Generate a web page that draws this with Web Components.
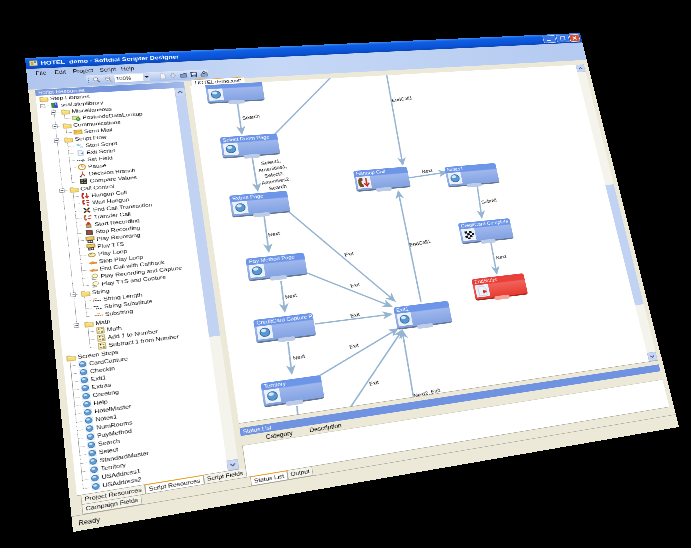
<!DOCTYPE html>
<html>
<head>
<meta charset="utf-8">
<title>Softdial Scripter Designer</title>
<style>
    html, body { margin: 0; height: 100%; overflow: hidden; background: #000; }
</style>
</head>
<body>
<scripter-window>
    <title-bar slot="title">HOTEL&nbsp; demo - Softdial Scripter Designer</title-bar>
    <command-band slot="band"></command-band>
    <dock-pane slot="left" heading="Script Resources">
        <tree-view></tree-view>
        <v-scroll thumb-top="0" thumb-size="68"></v-scroll>
    </dock-pane>
    <tab-strip slot="left-tabs" tabs="Project Resources|Script Resources|Script Fields" second="Campaign Fields" active="1"></tab-strip>
    <doc-tab slot="doc">HOTEL demo.xml*</doc-tab>
    <flow-diagram slot="canvas"></flow-diagram>
    <v-scroll slot="canvas-scroll" thumb-top="42" thumb-size="42"></v-scroll>
    <status-list slot="status"></status-list>
    <tab-strip slot="status-tabs" tabs="Status List|Output" active="0"></tab-strip>
    <span slot="ready">Ready</span>
</scripter-window>

<script>
// flat size of the window and where its corners land in the picture
const WIN_W = 1160, WIN_H = 990;
const CORNERS = [[25, 58], [580, 33], [679, 427], [73, 532]];
const CANVAS_LEFT = 298, CANVAS_TOP = 86;

function homography() {
    const [p0, p1, p2, p3] = CORNERS;
    const dx1 = p1[0] - p2[0], dy1 = p1[1] - p2[1];
    const dx2 = p3[0] - p2[0], dy2 = p3[1] - p2[1];
    const sx = p0[0] - p1[0] + p2[0] - p3[0], sy = p0[1] - p1[1] + p2[1] - p3[1];
    const det = dx1 * dy2 - dy1 * dx2;
    const g = (sx * dy2 - sy * dx2) / det;
    const h = (dx1 * sy - dy1 * sx) / det;
    return {
        a: p1[0] - p0[0] + g * p1[0], b: p3[0] - p0[0] + h * p3[0], c: p0[0],
        d: p1[1] - p0[1] + g * p1[1], e: p3[1] - p0[1] + h * p3[1], f: p0[1],
        g, h
    };
}
const H = homography();

// picture position -> position on the diagram canvas
function toCanvas(x, y) {
    const m11 = H.a - H.g * x, m12 = H.b - H.h * x, r1 = x - H.c;
    const m21 = H.d - H.g * y, m22 = H.e - H.h * y, r2 = y - H.f;
    const det = m11 * m22 - m12 * m21;
    return [
        (r1 * m22 - m12 * r2) / det * WIN_W - CANVAS_LEFT,
        (m11 * r2 - m21 * r1) / det * WIN_H - CANVAS_TOP
    ];
}

const GLOBE = `<rect x="1" y="1" width="14" height="14" fill="#e4eefb"/><circle cx="8" cy="8" r="5.6" fill="#5f9ad0" stroke="#2f6ca6"/><ellipse cx="7" cy="6" rx="3" ry="2" fill="#cfe6f7"/>`;
const ICONS = {
    folder: `<path d="M1 4h5l1 2h8v8H1z" fill="#f8dc72" stroke="#b3973a"/><path d="M2 7h12" stroke="#fff3b8"/>`,
    lib: `<rect x="2" y="3" width="5" height="11" fill="#3f8f3f"/><rect x="7" y="2" width="6" height="12" fill="#3d50c8"/><path d="M9 4h2M9 7h2" stroke="#fff"/>`,
    lookup: `<rect x="1" y="4" width="11" height="8" fill="#e6e6a0" stroke="#6c9a3a"/><circle cx="11" cy="11" r="3" fill="none" stroke="#2e8b2e" stroke-width="2"/>`,
    mail: `<rect x="1" y="4" width="14" height="9" fill="#f5d060" stroke="#b58a1c"/><path d="M1 4l7 5 7-5" fill="none" stroke="#b58a1c"/><path d="M2 11l3-2" stroke="#d33"/>`,
    start: `<rect x="3" y="3" width="5" height="5" fill="#8fd0e8"/><rect x="9" y="8" width="5" height="5" fill="#d5e4f5"/><path d="M8 8l2-3" stroke="#6aa"/>`,
    exit: `<path d="M4 2h6l3 3v9H4z" fill="#eef3fb" stroke="#9db2cf"/><path d="M9 9l4-2v5z" fill="#5078c0"/>`,
    setfield: `<path d="M1 9h13" stroke="#555" stroke-dasharray="2 1" stroke-width="2"/><path d="M10 6l4 3-4 3" fill="none" stroke="#333"/>`,
    pause: `<circle cx="8" cy="8" r="6" fill="#fff" stroke="#c89a20" stroke-width="2"/><path d="M8 4v4h3" fill="none" stroke="#b33"/>`,
    branch: `<path d="M8 2v5M8 7l-4 6M8 7l4 6" fill="none" stroke="#b03030" stroke-width="1.5"/><circle cx="4" cy="13" r="1.5" fill="#345"/>`,
    compare: `<rect x="2" y="2" width="12" height="12" fill="#333"/><path d="M4 5h3M5.500 3.500v3M9 11h3" stroke="#f2d24e" stroke-width="1.500"/><path d="M4 11h3M9 5h3" stroke="#fff" stroke-width="1.500"/>`,
    hangup: `<path d="M3 2h3v3L4 7v3l2 1v3H3C1 12 1 4 3 2z" fill="#c03020"/><path d="M11 2v9M8 9l3 4 3-4" fill="none" stroke="#c03020" stroke-width="2"/>`,
    wait: `<path d="M3 1h3v3L4 5v2l2 1v3H3C1 9 1 3 3 1z" fill="#c03020"/><path d="M9 3h5M9 7h5M11 10v5" stroke="#c03020" stroke-width="2"/>`,
    endcall: `<path d="M3 3l10 10M13 3L3 13" stroke="#222" stroke-width="2.500"/><circle cx="8" cy="8" r="2" fill="#d9a520"/>`,
    transfer: `<path d="M3 2h3v3L4 6v4l2 1v3H3C1 11 1 5 3 2z" fill="#a8682a"/><path d="M9 5h5l-2-2M14 10H9l2 2" fill="none" stroke="#c03020" stroke-width="1.500"/>`,
    record: `<rect x="4" y="6" width="8" height="8" fill="#caa26a" stroke="#665"/><circle cx="8" cy="5" r="3" fill="#d83020"/>`,
    stop: `<rect x="2" y="3" width="12" height="11" fill="#555"/><rect x="5" y="6" width="6" height="5" fill="#cc3a28"/>`,
    play: `<rect x="1" y="2" width="14" height="7" fill="#f0c860" stroke="#8c6c20"/><rect x="3" y="9" width="10" height="6" fill="#3a3a3a"/><circle cx="6" cy="12" r="1.500" fill="#eee"/><circle cx="10" cy="12" r="1.500" fill="#eee"/>`,
    loop: `<ellipse cx="8" cy="9" rx="6" ry="4" fill="#f6eeb0" stroke="#a89030" stroke-width="1.500"/><path d="M5 4l3 2-3 2" fill="none" stroke="#777"/>`,
    stoploop: `<path d="M1 10l8-3v2h6v3H6v1z" fill="#f09830" stroke="#b05c10" stroke-width=".5"/>`,
    capture: `<ellipse cx="9" cy="6" rx="5" ry="4" fill="#fff8c8" stroke="#8a8030"/><path d="M3 13h8M3 10h4" stroke="#444"/>`,
    str: `<path d="M1 10h14" stroke="#444" stroke-width="2" stroke-dasharray="2 1"/><path d="M2 6h6" stroke="#c05030"/>`,
    sub: `<path d="M1 6h9M5 11h10" stroke="#333" stroke-width="2" stroke-dasharray="2 1"/>`,
    substr: `<path d="M1 9h14" stroke="#d07040" stroke-width="2" stroke-dasharray="2 1"/><path d="M5 5h5l-2 2" fill="none" stroke="#c0a080"/>`,
    math: `<rect x="2" y="2" width="12" height="12" fill="#fff4c0" stroke="#8c7a28"/><path d="M4 5h3M5.500 3.500v3M9 5h3M4 11h3M9 10h3M9 12h3" stroke="#222"/>`,
    screen: GLOBE
};

const TREE = [
    { t: 'Step Libraries', i: 'folder', c: [
        { t: 'ssal.steplibrary', i: 'lib', x: 1, c: [
            { t: 'Miscellaneous', i: 'folder', x: 1, c: [
                { t: 'PostcodeDataLookup', i: 'lookup' }
            ] },
            { t: 'Communications', i: 'folder', x: 1, c: [
                { t: 'Send Mail', i: 'mail' }
            ] },
            { t: 'Script Flow', i: 'folder', x: 1, c: [
                { t: 'Start Script', i: 'start' },
                { t: 'Exit Script', i: 'exit' },
                { t: 'Set Field', i: 'setfield' },
                { t: 'Pause', i: 'pause' },
                { t: 'Decision Branch', i: 'branch' },
                { t: 'Compare Values', i: 'compare' }
            ] },
            { t: 'Call Control', i: 'folder', x: 1, c: [
                { t: 'Hangup Call', i: 'hangup' },
                { t: 'Wait Hangup', i: 'wait' },
                { t: 'End Call Transaction', i: 'endcall' },
                { t: 'Transfer Call', i: 'transfer' },
                { t: 'Start Recording', i: 'record' },
                { t: 'Stop Recording', i: 'stop' },
                { t: 'Play Recording', i: 'play' },
                { t: 'Play TTS', i: 'play' },
                { t: 'Play Loop', i: 'loop' },
                { t: 'Stop Play Loop', i: 'stoploop' },
                { t: 'End Call with Callback', i: 'stoploop' },
                { t: 'Play Recording and Capture', i: 'capture' },
                { t: 'Play TTS and Capture', i: 'capture' }
            ] },
            { t: 'String', i: 'folder', x: 1, c: [
                { t: 'String Length', i: 'str' },
                { t: 'String Substitute', i: 'sub' },
                { t: 'Substring', i: 'substr' }
            ] },
            { t: 'Math', i: 'folder', x: 1, c: [
                { t: 'Math', i: 'math' },
                { t: 'Add 1 to Number', i: 'math' },
                { t: 'Subtract 1 from Number', i: 'math' }
            ] }
        ] }
    ] },
    { t: 'Screen Steps', i: 'folder', c: ['CardCapture', 'CheckIn', 'Exit1', 'Extras', 'Greeting', 'Help', 'HotelMaster',
        'Notes1', 'NumRooms', 'PayMethod', 'Search', 'Select', 'StandardMaster', 'Territory', 'USAddress1', 'USAddress2']
        .map(t => ({ t, i: 'screen' })) }
];

class ScripterWindow extends HTMLElement {
    constructor() {
        super();
        this.attachShadow({ mode: 'open' });
        this.shadowRoot.innerHTML = `
            <style>
                :host {
                    position: absolute;
                    left: 0;
                    top: 0;
                    width: ${WIN_W}px;
                    height: ${WIN_H}px;
                    display: flex;
                    flex-direction: column;
                    transform-origin: 0 0;
                    background: #ece9d8;
                    font: 11.5px 'Liberation Sans', sans-serif;
                    color: #111;
                }
                .main {
                    flex: 1;
                    min-height: 0;
                    display: flex;
                    gap: 11px;
                    padding: 0 10px 0 12px;
                }
                .left { width: 275px; display: flex; flex-direction: column; padding-top: 1px; box-sizing: border-box; }
                .right { flex: 1; min-width: 0; display: flex; flex-direction: column; }
                .doc { height: 12px; display: flex; align-items: flex-end; }
                .canvas-row { height: 748px; display: flex; background: #fff; }
                .canvas-row ::slotted(flow-diagram) { flex: 1; min-width: 0; }
                .divider { height: 10px; flex: none; box-sizing: border-box; border-top: 1px solid #aca899; }
                .status { flex: 1; min-height: 0; display: flex; flex-direction: column; }
                .ready {
                    height: 29px;
                    box-sizing: border-box;
                    padding: 7px 10px;
                    font-size: 12px;
                    border-top: 1px solid #aca899;
                    background: #ece9d8;
                }
            </style>
            <slot name="title"></slot>
            <slot name="band"></slot>
            <div class="main">
                <div class="left">
                    <slot name="left"></slot>
                    <slot name="left-tabs"></slot>
                </div>
                <div class="right">
                    <div class="doc"><slot name="doc"></slot></div>
                    <div class="canvas-row">
                        <slot name="canvas"></slot>
                        <slot name="canvas-scroll"></slot>
                    </div>
                    <div class="divider"></div>
                    <div class="status">
                        <slot name="status"></slot>
                        <slot name="status-tabs"></slot>
                    </div>
                </div>
            </div>
            <div class="ready"><slot name="ready"></slot></div>
        `;
    }

    connectedCallback() {
        const m = H;
        this.style.transform = `matrix3d(${m.a / WIN_W},${m.d / WIN_W},0,${m.g / WIN_W},` +
            `${m.b / WIN_H},${m.e / WIN_H},0,${m.h / WIN_H},0,0,1,0,${m.c},${m.f},0,1)`;
    }
}

class TitleBar extends HTMLElement {
    constructor() {
        super();
        this.attachShadow({ mode: 'open' });
        this.shadowRoot.innerHTML = `
            <style>
                :host {
                    height: 26px;
                    flex: none;
                    display: flex;
                    align-items: center;
                    gap: 5px;
                    padding: 0 4px 0 6px;
                    background: linear-gradient(#3d8cf0 0, #0f5fe4 22%, #0a52d6 75%, #0c46b4 100%);
                    color: #fff;
                    font: bold 13px 'Liberation Sans', sans-serif;
                }
                .name { flex: 1; white-space: nowrap; }
                .btn {
                    width: 30px;
                    height: 20px;
                    box-sizing: border-box;
                    border: 1px solid #e4ecfb;
                    border-radius: 3px;
                    background: #3a74e0;
                }
                .btn + .btn { margin-left: -3px; }
                .btn.close { width: 24px; background: #d9512f; }
                svg { display: block; }
            </style>
            <svg width="16" height="16" viewBox="0 0 16 16">
                <rect x="1" y="2" width="14" height="12" fill="#dfe6c8" stroke="#7a8a6a"/>
                <rect x="3" y="4" width="5" height="8" fill="#e0a030"/>
                <rect x="9" y="4" width="4" height="4" fill="#4d80c0"/>
            </svg>
            <span class="name"><slot></slot></span>
            <div class="btn"><svg width="28" height="18"><path d="M8 13h8" stroke="#fff" stroke-width="2"/></svg></div>
            <div class="btn"><svg width="28" height="18"><rect x="9" y="4" width="10" height="9" fill="none" stroke="#fff" stroke-width="1.500"/></svg></div>
            <div class="btn close"><svg width="22" height="18"><path d="M7 5l8 8M15 5l-8 8" stroke="#fff" stroke-width="2"/></svg></div>
        `;
    }
}

class CommandBand extends HTMLElement {
    constructor() {
        super();
        this.attachShadow({ mode: 'open' });
        this.shadowRoot.innerHTML = `
            <style>
                :host {
                    height: 48px;
                    flex: none;
                    display: flex;
                    flex-direction: column;
                    background: linear-gradient(90deg, #b0c6ee, #c6d8f6 40%, #b4caf0);
                    font: 12px 'Liberation Sans', sans-serif;
                    color: #111;
                }
                .menu { height: 22px; display: flex; align-items: center; padding-left: 16px; }
                .menu span:nth-child(1) { width: 34px; }
                .menu span:nth-child(2) { width: 33px; }
                .menu span:nth-child(3) { width: 49px; }
                .menu span:nth-child(4) { width: 40px; }
                .tools {
                    margin-left: 105px;
                    width: 231px;
                    height: 22px;
                    display: flex;
                    align-items: center;
                    box-sizing: border-box;
                    padding-left: 4px;
                    border-radius: 3px;
                    background: linear-gradient(#dbe6f9, #a9c1ea);
                }
                .grip { width: 3px; height: 16px; background: repeating-linear-gradient(#3c5a90 0 2px, transparent 2px 4px); }
                .ico { width: 16px; height: 16px; flex: none; }
                .combo {
                    width: 66px;
                    height: 18px;
                    margin: 0 6px 0 4px;
                    box-sizing: border-box;
                    flex: none;
                    background: #fff;
                    display: flex;
                    align-items: center;
                    padding-left: 3px;
                    font-size: 11px;
                    position: relative;
                }
                .combo i { position: absolute; right: 0; top: 0; bottom: 0; width: 13px; background: #c7d6f2; }
                .combo i::after { content: ''; position: absolute; left: 3px; top: 7px; border: 4px solid transparent; border-top-color: #223; }
            </style>
            <div class="menu"><span>File</span><span>Edit</span><span>Project</span><span>Script</span><span>Help</span></div>
            <div class="tools">
                <div class="grip"></div>
                <svg class="ico" style="margin-left:6px" viewBox="0 0 16 16"><circle cx="7" cy="7" r="4" fill="#f2f6fc" stroke="#667"/><path d="M10 10l4 4" stroke="#667" stroke-width="2"/></svg>
                <svg class="ico" style="margin-left:6px" viewBox="0 0 16 16"><circle cx="7" cy="7" r="4" fill="#f2f6fc" stroke="#667"/><path d="M10 10l4 4M5 7h4" stroke="#667"/></svg>
                <div class="combo">100%<i></i></div>
                <div class="grip"></div>
                <svg class="ico" style="margin-left:10px" viewBox="0 0 16 16"><path d="M4 2h6l3 3v9H4z" fill="#eef2f8" stroke="#a0abc0"/></svg>
                <svg class="ico" style="margin-left:4px" viewBox="0 0 16 16"><path d="M6 2h4v5h3l-5 6-5-6h3z" fill="#dbe5f5" stroke="#8797b0"/></svg>
                <svg class="ico" style="margin-left:4px" viewBox="0 0 16 16"><path d="M2 6h5l1-2h6v9H2z" fill="#7f9cc8" stroke="#2c3f66"/><path d="M9 2l3 3" stroke="#223"/></svg>
                <svg class="ico" style="margin-left:4px" viewBox="0 0 16 16"><rect x="2" y="2" width="12" height="12" fill="#2a3f6c"/><rect x="4" y="3" width="8" height="5" fill="#eef"/><rect x="5" y="10" width="6" height="4" fill="#99a8c4"/></svg>
                <svg class="ico" style="margin-left:4px" viewBox="0 0 16 16"><path d="M2 7h5l1-2h6v8H2z" fill="#8da8d0" stroke="#2c3f66"/><circle cx="8" cy="4" r="2.500" fill="none" stroke="#223"/></svg>
            </div>
        `;
    }
}

class DockPane extends HTMLElement {
    constructor() {
        super();
        this.attachShadow({ mode: 'open' });
        this.shadowRoot.innerHTML = `
            <style>
                :host { flex: 1; min-height: 0; display: flex; flex-direction: column; }
                .head {
                    height: 14px;
                    flex: none;
                    padding: 0 5px;
                    line-height: 14px;
                    font-size: 11px;
                    color: #fff;
                    background: linear-gradient(90deg, #7d9bdc, #7393dd 55%, #a5bcea);
                }
                .body { flex: 1; min-height: 0; display: flex; background: #fff; }
            </style>
            <div class="head"></div>
            <div class="body"><slot></slot></div>
        `;
        this.shadowRoot.querySelector('.head').textContent = this.getAttribute('heading');
    }
}

class TreeRow extends HTMLElement {
    constructor() {
        super();
        this.attachShadow({ mode: 'open' });
    }

    connectedCallback() {
        const level = +this.getAttribute('level');
        const guides = JSON.parse(this.getAttribute('guides') || '[]');
        const lines = guides.map(g => `<i class="v ${g.half ? 'half' : ''}" style="left:${g.x}px"></i>`).join('');
        const stub = level > 0 ? `<i class="h" style="left:${18 * level - 7}px"></i>` : '';
        const box = this.hasAttribute('expander')
            ? `<b class="box" style="left:${18 * level - 12}px"></b>` : '';
        this.shadowRoot.innerHTML = `
            <style>
                :host { display: block; position: relative; height: 16px; white-space: nowrap; }
                i { position: absolute; display: block; }
                .v { top: 0; bottom: 0; border-left: 1px dotted #8a8a8a; }
                .v.half { bottom: 8px; }
                .h { top: 8px; width: 10px; border-top: 1px dotted #8a8a8a; }
                .box {
                    position: absolute;
                    top: 4px;
                    width: 9px;
                    height: 9px;
                    box-sizing: border-box;
                    border: 1px solid #8a94a4;
                    background: #fff linear-gradient(#3c4a5c, #3c4a5c) center / 5px 1px no-repeat;
                }
                svg { position: absolute; top: 0; width: 16px; height: 16px; }
                .label { position: absolute; top: 1px; line-height: 15px; }
            </style>
            ${lines}${stub}${box}
            <svg viewBox="0 0 16 16" style="left:${6 + 18 * level}px">${ICONS[this.getAttribute('icon')]}</svg>
            <span class="label" style="left:${25 + 18 * level}px"><slot></slot></span>
        `;
    }
}

class TreeView extends HTMLElement {
    constructor() {
        super();
        this.attachShadow({ mode: 'open' });
        this.shadowRoot.innerHTML = `
            <style>
                :host { flex: 1; min-width: 0; display: block; overflow: hidden; background: #fff; }
            </style>
        `;
        this.walk(TREE, 0, []);
    }

    walk(items, level, guides) {
        items.forEach((item, idx) => {
            const last = idx === items.length - 1;
            const own = level > 0 ? [{ x: 18 * level - 7, half: last }] : [];
            const row = document.createElement('tree-row');
            row.setAttribute('level', level);
            row.setAttribute('icon', item.i);
            row.setAttribute('guides', JSON.stringify(guides.concat(own)));
            if (item.x) row.setAttribute('expander', '');
            row.textContent = item.t;
            this.shadowRoot.appendChild(row);
            if (item.c) {
                const keep = level > 0 && !last ? [{ x: 18 * level - 7 }] : [];
                this.walk(item.c, level + 1, guides.concat(keep));
            }
        });
    }
}

class VScroll extends HTMLElement {
    constructor() {
        super();
        this.attachShadow({ mode: 'open' });
        const top = this.getAttribute('thumb-top'), size = this.getAttribute('thumb-size');
        this.shadowRoot.innerHTML = `
            <style>
                :host {
                    width: 20px;
                    flex: none;
                    display: flex;
                    flex-direction: column;
                    background: #f5f4ec;
                }
                .arrow { height: 20px; flex: none; background: #c9d7f4; border: 1px solid #b0c2e8; box-sizing: border-box; }
                svg { display: block; }
                .track { flex: 1; position: relative; }
                .thumb { position: absolute; left: 0; right: 0; background: #c2d2f3; }
            </style>
            <div class="arrow"><svg width="18" height="18"><path d="M5 11l4-4 4 4" fill="none" stroke="#4d6185" stroke-width="2"/></svg></div>
            <div class="track"><div class="thumb" style="top:${top}%;height:${size}%"></div></div>
            <div class="arrow"><svg width="18" height="18"><path d="M5 7l4 4 4-4" fill="none" stroke="#4d6185" stroke-width="2"/></svg></div>
        `;
    }
}

class TabStrip extends HTMLElement {
    constructor() {
        super();
        this.attachShadow({ mode: 'open' });
        const active = +this.getAttribute('active');
        const tabs = this.getAttribute('tabs').split('|')
            .map((t, i) => `<span class="tab ${i === active ? 'on' : ''}">${t}</span>`).join('');
        const second = this.getAttribute('second');
        this.shadowRoot.innerHTML = `
            <style>
                :host {
                    flex: none;
                    display: flex;
                    flex-direction: column;
                    font-size: 11.5px;
                    padding-left: 6px;
                    border-top: 1px solid #aca899;
                }
                .row { display: flex; height: 18px; }
                .tab {
                    padding: 2px 5px 0;
                    box-sizing: border-box;
                    white-space: nowrap;
                    border: 1px solid #aca899;
                    border-top: 0;
                    background: #f4f3ea;
                }
                .tab.on { background: #fff; border-top: 2px solid #eda62a; margin-top: -1px; height: 19px; }
            </style>
            <div class="row">${tabs}</div>
            ${second ? `<div class="row"><span class="tab">${second}</span></div>` : ''}
        `;
    }
}

class DocTab extends HTMLElement {
    constructor() {
        super();
        this.attachShadow({ mode: 'open' });
        this.shadowRoot.innerHTML = `
            <style>
                :host {
                    display: block;
                    height: 14px;
                    margin-left: 4px;
                    padding: 0 6px;
                    line-height: 14px;
                    font-size: 11px;
                    background: #fff;
                    border-top: 1px solid #eda62a;
                    white-space: nowrap;
                    position: relative;
                }
            </style>
            <slot></slot>
        `;
    }
}

class FlowNode extends HTMLElement {
    constructor() {
        super();
        this.attachShadow({ mode: 'open' });
        const pic = this.getAttribute('pic') || 'globe';
        const pics = {
            globe: `<circle cx="14" cy="14" r="9" fill="#5b97cf" stroke="#2e6aa5" stroke-width="1.500"/><ellipse cx="12" cy="10" rx="5" ry="3.500" fill="#d4e8f8"/>`,
            hangup: `<path d="M6 3h6v6L9 11v6l3 2v6H6C1 20 1 8 6 3z" fill="#7a4a20"/><path d="M19 4v17M14 16l5 7 5-7" fill="none" stroke="#d02818" stroke-width="3"/>`,
            flag: `<g fill="#111"><rect x="6" y="6" width="5" height="5"/><rect x="16" y="6" width="5" height="5"/><rect x="11" y="11" width="5" height="5"/><rect x="21" y="11" width="4" height="5"/><rect x="6" y="16" width="5" height="5"/><rect x="16" y="16" width="5" height="5"/><rect x="11" y="21" width="5" height="4"/></g>`,
            end: `<path d="M6 4h11l5 5v16H6z" fill="#eef2fa" stroke="#a8b8d0"/><path d="M15 12l9 4-9 5z" fill="#cc2a30"/>`
        };
        this.shadowRoot.innerHTML = `
            <style>
                :host {
                    position: absolute;
                    width: 112px;
                    height: 50px;
                    --top: #6d95e8;
                    --mid: #9fb7ec;
                    --low: #82a2e2;
                    --edge: #66778f;
                    --foot: #bccbe8;
                }
                :host([red]) {
                    --top: #e8403a;
                    --mid: #f0635a;
                    --low: #ea3a30;
                    --edge: #a82a24;
                    --foot: #f6a49a;
                }
                .box {
                    position: absolute;
                    inset: 0;
                    box-sizing: border-box;
                    border-radius: 5px;
                    border-bottom: 3px solid var(--edge);
                    background: linear-gradient(var(--top) 0, var(--top) 30%, var(--mid) 34%, var(--low) 100%);
                    color: #fff;
                    font-size: 11px;
                    line-height: 15px;
                    padding-left: 5px;
                    white-space: nowrap;
                    overflow: hidden;
                }
                .pic {
                    position: absolute;
                    left: 4px;
                    top: 15px;
                    width: 28px;
                    height: 28px;
                    background: #eaf1fb;
                }
                .foot {
                    position: absolute;
                    left: 40px;
                    bottom: -4px;
                    width: 32px;
                    height: 9px;
                    border-radius: 4px;
                    background: var(--foot);
                }
            </style>
            <div class="box"><slot></slot><svg class="pic" viewBox="0 0 28 28">${pics[pic]}</svg></div>
            <div class="foot"></div>
        `;
    }
}

// all positions below are read off the picture and mapped back by toCanvas
const NODES = [
    ['', 235, 92],
    ['Select Room Page', 250, 146],
    ['Extras Page', 260, 204],
    ['Pay Method Page', 277, 267],
    ['CreditCard Capture P...', 285, 328],
    ['Territory', 293, 391],
    ['Exit1', 423, 315],
    ['Hangup Call', 382, 179, 'hangup'],
    ['Notes1', 472, 175],
    ['CreditCard Complete', 486, 231, 'flag'],
    ['EndScript', 500, 287, 'end', true]
];

const EDGES = [
    [237, 100, 242, 135, 1],
    [275, 134, 340, 68, 0],
    [384, 60, 403, 166, 1],
    [252, 156, 258, 192, 1],
    [264, 215, 269, 253, 1],
    [289, 212, 396, 302, 1],
    [281, 281, 285, 313, 1],
    [307, 273, 393, 307, 1],
    [288, 342, 292, 375, 1],
    [315, 324, 393, 314, 1],
    [319, 376, 399, 328, 1],
    [346, 414, 403, 329, 1],
    [416, 412, 402, 329, 1],
    [297, 406, 299, 430, 0],
    [421, 302, 398, 190, 1],
    [408, 178, 448, 172, 1],
    [477, 184, 482, 219, 1],
    [491, 243, 497, 275, 1]
];

const LABELS = [
    [['Search'], 251, 117],
    [['Select1,', 'Amenities1,', 'Select2,', 'Amenities2,', 'Search'], 271, 162],
    [['EndCall1'], 402, 99],
    [['Next'], 274, 234],
    [['Exit'], 349, 254],
    [['Next'], 291, 296],
    [['Exit'], 355, 285],
    [['Next'], 299, 357],
    [['Exit'], 355, 315],
    [['Exit'], 354, 346],
    [['Exit'], 374, 383],
    [['Next2, Exit'], 427, 393],
    [['EndCall1'], 420, 243],
    [['Next'], 427, 171],
    [['Submit'], 489, 201],
    [['Next'], 501, 257]
];

class FlowDiagram extends HTMLElement {
    constructor() {
        super();
        this.attachShadow({ mode: 'open' });
        const edges = EDGES.map(([x1, y1, x2, y2, arrow]) => {
            const [ax, ay] = toCanvas(x1, y1), [bx, by] = toCanvas(x2, y2);
            const len = Math.hypot(bx - ax, by - ay), ux = (bx - ax) / len, uy = (by - ay) / len;
            const line = `<line x1="${ax}" y1="${ay}" x2="${bx - ux * (arrow ? 12 : 0)}" y2="${by - uy * (arrow ? 12 : 0)}"/>`;
            if (!arrow) return line;
            const pt = (back, side) => `${bx - ux * back - uy * side},${by - uy * back + ux * side}`;
            return line + `<polygon points="${pt(0, 0)} ${pt(21, 9)} ${pt(15, 0)} ${pt(21, -9)}"/>`;
        }).join('');
        const labels = LABELS.map(([lines, x, y]) => {
            const [lx, ly] = toCanvas(x, y);
            const spans = lines.map((l, i) => `<tspan x="${lx}" dy="${i ? 15 : 0}">${l}</tspan>`).join('');
            return `<text x="${lx}" y="${ly + 4}" transform="rotate(-5 ${lx} ${ly})">${spans}</text>`;
        }).join('');
        const nodes = NODES.map(([name, x, y, pic, red]) => {
            const [nx, ny] = toCanvas(x, y);
            return `<flow-node style="left:${nx - 56}px;top:${ny - 25}px" ${pic ? `pic="${pic}"` : ''} ${red ? 'red' : ''}>${name}</flow-node>`;
        }).join('');
        this.shadowRoot.innerHTML = `
            <style>
                :host { display: block; position: relative; overflow: hidden; background: #fff; }
                svg { position: absolute; left: 0; top: 0; width: 100%; height: 100%; }
                line { stroke: #94b4d2; stroke-width: 3; }
                polygon { fill: #94b4d2; }
                text { font: 11px 'Liberation Sans', sans-serif; fill: #111; text-anchor: middle; }
            </style>
            <svg>${edges}${labels}</svg>
            ${nodes}
        `;
    }
}

class StatusList extends HTMLElement {
    constructor() {
        super();
        this.attachShadow({ mode: 'open' });
        this.shadowRoot.innerHTML = `
            <style>
                :host { flex: 1; min-height: 0; display: flex; flex-direction: column; }
                .head {
                    height: 16px;
                    flex: none;
                    padding: 0 5px;
                    line-height: 16px;
                    font-size: 11px;
                    color: #fff;
                    background: #6f93e0;
                }
                .cols {
                    height: 20px;
                    flex: none;
                    display: grid;
                    grid-template-columns: 44px 80px 1fr;
                    align-items: center;
                    font-size: 12px;
                    box-sizing: border-box;
                    border-bottom: 1px solid #cfccbb;
                }
                .list { flex: 1; background: #fff; border-left: 1px solid #aca899; }
            </style>
            <div class="head">Status List</div>
            <div class="cols"><span></span><span>Category</span><span>Description</span></div>
            <div class="list"></div>
        `;
    }
}

customElements.define('tree-row', TreeRow);
customElements.define('tree-view', TreeView);
customElements.define('flow-node', FlowNode);
customElements.define('flow-diagram', FlowDiagram);
customElements.define('v-scroll', VScroll);
customElements.define('tab-strip', TabStrip);
customElements.define('doc-tab', DocTab);
customElements.define('dock-pane', DockPane);
customElements.define('status-list', StatusList);
customElements.define('title-bar', TitleBar);
customElements.define('command-band', CommandBand);
customElements.define('scripter-window', ScripterWindow);
</script>
</body>
</html>
